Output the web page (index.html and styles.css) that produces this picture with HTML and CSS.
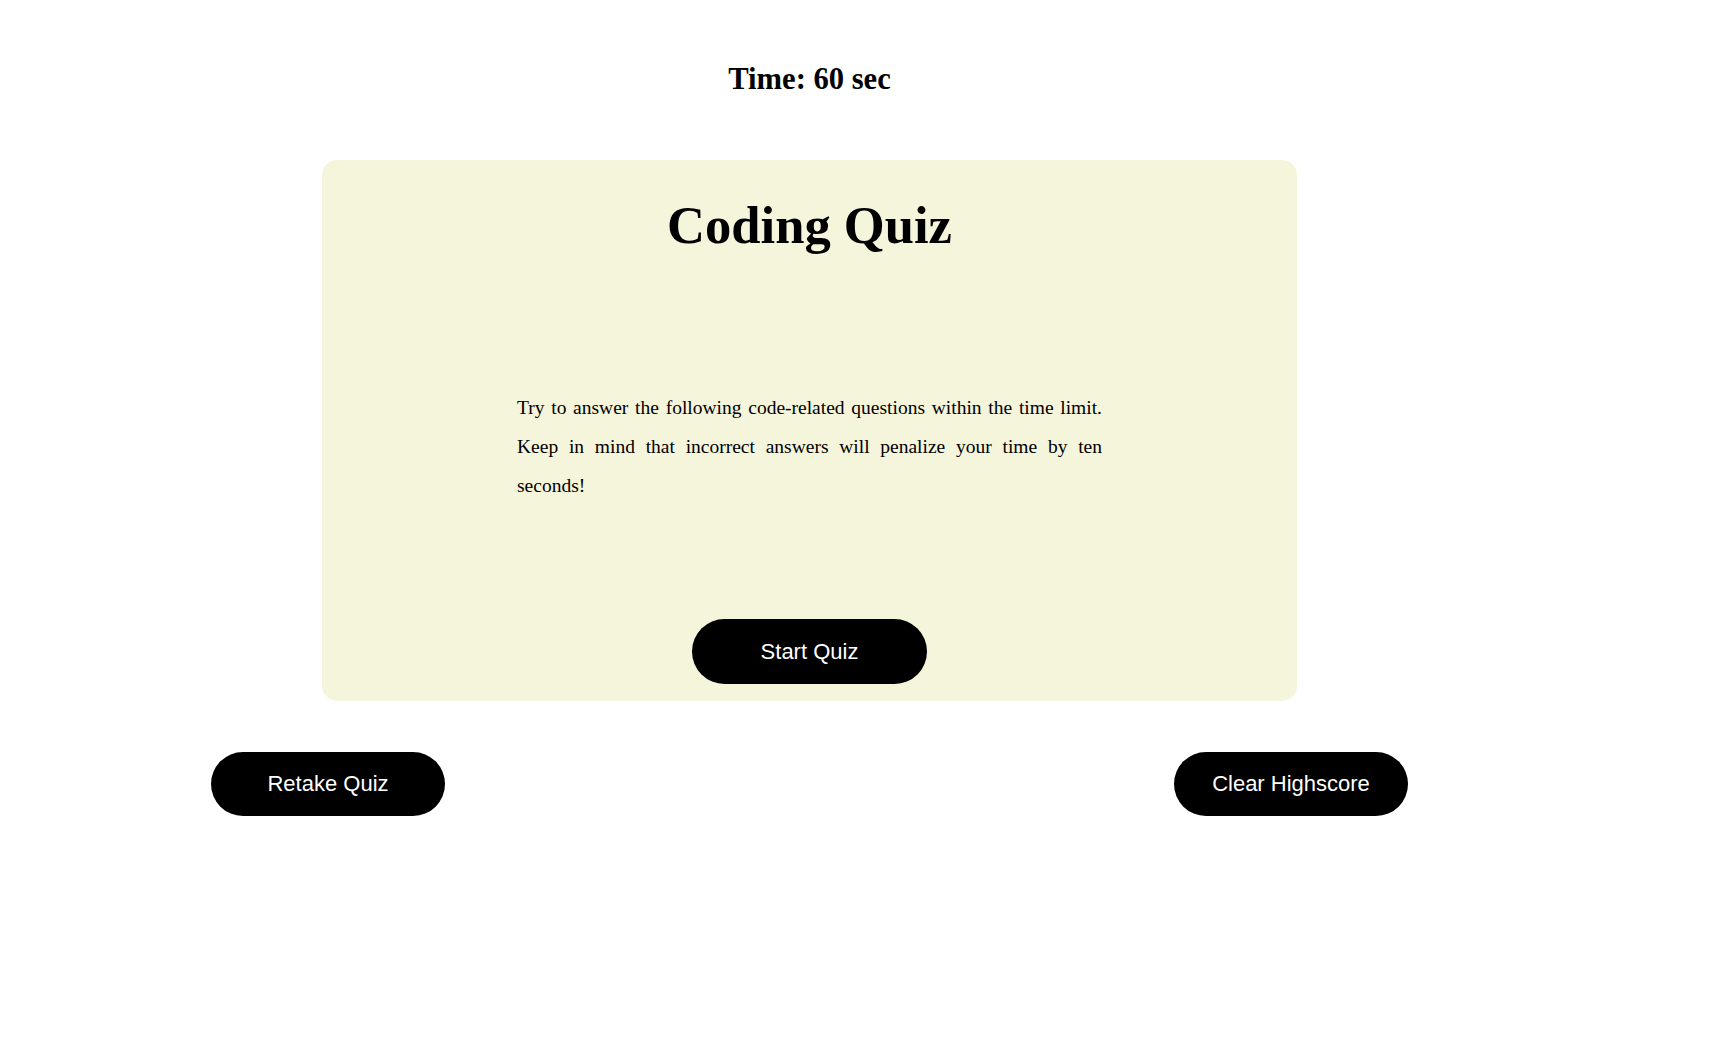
FILE: index.html
```html
<!DOCTYPE html>
<html lang="en">
<head>
<meta charset="utf-8">
<title>Coding Quiz</title>
<link rel="stylesheet" href="styles.css">
</head>
<body>
<div class="wrap">
  <h2 class="timer">Time: 60 sec</h2>
  <section class="card">
    <h1 class="title">Coding Quiz</h1>
    <p class="intro">Try to answer the following code-related questions within the time limit. Keep in mind that incorrect answers will penalize your time by ten seconds!</p>
    <button class="btn start">Start Quiz</button>
  </section>
  <div class="actions">
    <button class="btn">Retake Quiz</button>
    <button class="btn">Clear Highscore</button>
  </div>
</div>
</body>
</html>
```

FILE: styles.css
```css
html, body {
  margin: 0;
  padding: 0;
  background: #ffffff;
}

body {
  font-family: "Liberation Serif", "Times New Roman", serif;
  color: #000;
}

.wrap {
  width: 1619px;
  display: flex;
  flex-direction: column;
  align-items: center;
}

.timer {
  margin: 62px 0 0;
  font-size: 30.6px;
  font-weight: bold;
  line-height: normal;
  text-align: center;
}

.card {
  margin-top: 63px;
  width: 975px;
  height: 541px;
  box-sizing: border-box;
  background: #f5f5dc;
  border-radius: 15px;
  display: flex;
  flex-direction: column;
  align-items: center;
  padding-top: 35px;
}

.title {
  margin: 0;
  font-size: 52.6px;
  font-weight: bold;
  line-height: normal;
  text-align: center;
}

.intro {
  margin: 133px 0 0;
  width: 60%;
  font-size: 19.5px;
  line-height: 39px;
  text-align: justify;
}

.btn {
  width: 234px;
  height: 64px;
  border: none;
  border-radius: 999px;
  background: #000;
  color: #fff;
  font-family: "Liberation Sans", Arial, sans-serif;
  font-size: 22px;
  padding: 0;
  cursor: pointer;
}

.start {
  margin-top: 114px;
  width: 235px;
  height: 65px;
}

.actions {
  margin-top: 51px;
  width: 100%;
  box-sizing: border-box;
  padding: 0 211px;
  display: flex;
  justify-content: space-between;
}
```
